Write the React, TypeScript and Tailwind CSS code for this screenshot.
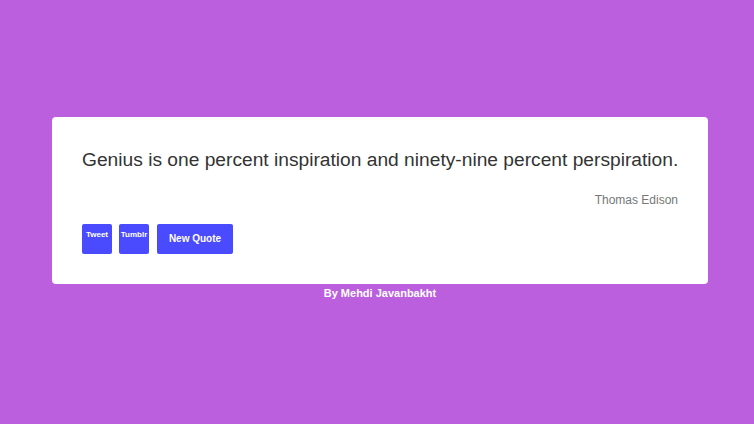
export default function App() {
  return (
    <div className="w-[754px] h-[424px] bg-[#bc5fde] flex flex-col items-center pt-[117px] pl-[6px] font-['Liberation_Sans',Arial,sans-serif]">
      <div className="w-[656px] h-[167px] bg-white rounded-[4px] px-[30px] pt-[30px]">
        <p className="text-[19.2px] leading-[26px] text-[#333] text-center whitespace-nowrap">
          Genius is one percent inspiration and ninety-nine percent perspiration.
        </p>
        <p className="text-[12px] leading-[16px] text-[#777] text-right mt-[19px]">Thomas Edison</p>
        <div className="flex gap-[7px] mt-[16px]">
          <button className="w-[30px] h-[30px] bg-[#4a4aff] rounded-[2px] text-white text-[8px] font-bold leading-none pt-[7px] flex justify-center items-start">Tweet</button>
          <button className="w-[30px] h-[30px] bg-[#4a4aff] rounded-[2px] text-white text-[8px] font-bold leading-none pt-[7px] flex justify-center items-start">Tumblr</button>
          <button className="ml-[1px] w-[76px] h-[30px] bg-[#4a4aff] rounded-[2px] text-white text-[10px] font-bold leading-none">New Quote</button>
        </div>
      </div>
      <p className="text-white text-[11px] font-bold leading-[16px] mt-[1px]">By Mehdi Javanbakht</p>
    </div>
  );
}
